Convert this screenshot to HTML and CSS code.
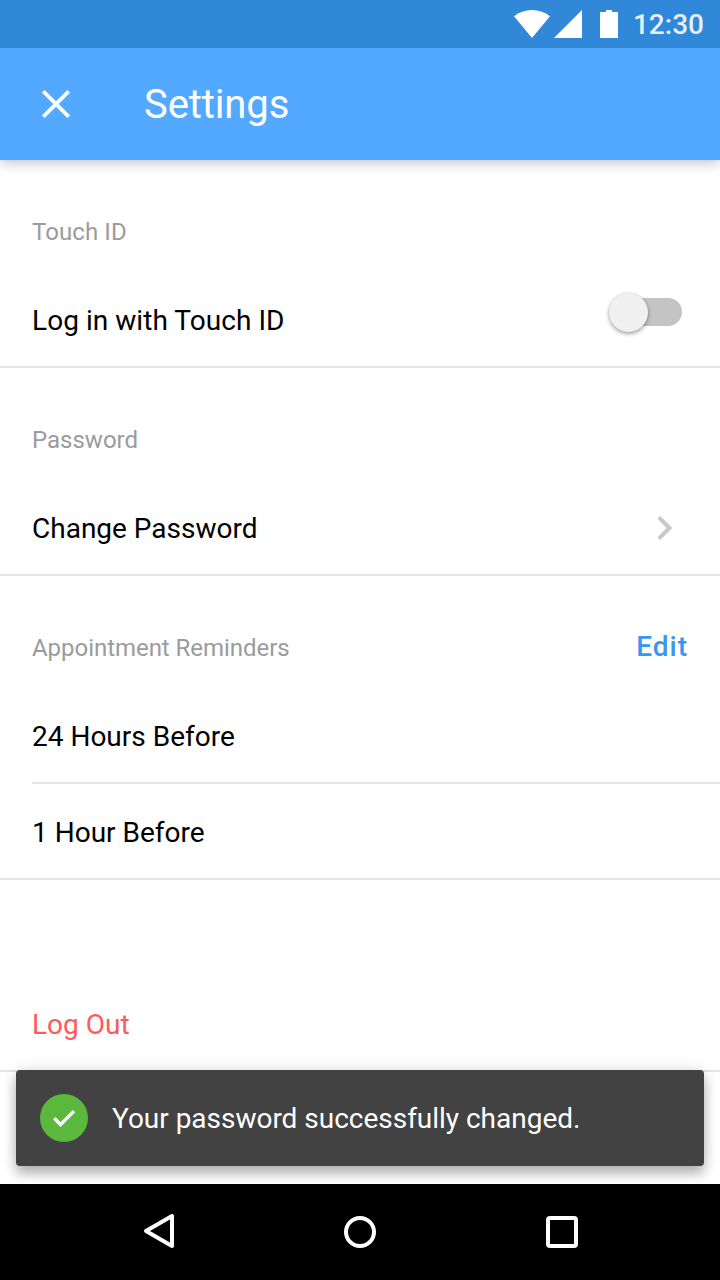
FILE: index.html
```html
<!DOCTYPE html>
<html lang="en">
<head>
<meta charset="utf-8">
<title>Settings</title>
<link rel="stylesheet" href="styles.css">
</head>
<body>
<div class="screen">
  <div class="status-bar">
    <svg class="status-icons" viewBox="0 0 104 28" fill="#fff">
      <path d="M18 28L0 6.200C5 2.300 11 0 18 0s13 2.300 18 6.200z"/>
      <path d="M40 28L68 0v28z"/>
      <path d="M86 2h6V0h6v2h6v26H86z"/>
    </svg>
    <span class="clock">12:30</span>
  </div>
  <header class="app-bar">
    <svg class="close" viewBox="0 0 28 28" fill="none" stroke="#fff" stroke-width="3.800"><path d="M1.300 1.300l25.400 25.400M26.700 1.300L1.300 26.700"/></svg>
    <h1 class="title">Settings</h1>
  </header>
  <main class="content">
    <section>
      <div class="section-head"><h2 class="label label-touch">Touch ID</h2></div>
      <div class="row">
        <span class="row-text text-touch">Log in with Touch ID</span>
        <span class="switch"><span class="thumb"></span></span>
      </div>
    </section>
    <section>
      <div class="section-head"><h2 class="label">Password</h2></div>
      <div class="row">
        <span class="row-text">Change Password</span>
        <svg class="chevron" viewBox="0 0 16 24" fill="none" stroke="#c8c8c8" stroke-width="4"><path d="M1.900 1.400L12.500 12 1.900 22.600"/></svg>
      </div>
    </section>
    <section>
      <div class="section-head"><h2 class="label label-reminders">Appointment Reminders</h2><a class="edit">Edit</a></div>
      <div class="row row-inset"><span class="row-text">24 Hours Before</span></div>
      <div class="row"><span class="row-text">1 Hour Before</span></div>
    </section>
    <div class="row row-logout"><span class="row-text">Log Out</span></div>
    <div class="snackbar">
      <svg class="check" viewBox="0 0 48 48" fill="none"><circle cx="24" cy="24" r="24" fill="#5ab93c"/><path d="M14.300 24.200L20.500 30.600 34 17.100" stroke="#fff" stroke-width="3.400"/></svg>
      <span class="message">Your password successfully changed.</span>
    </div>
  </main>
  <nav class="nav-bar">
    <svg class="nav-icon" viewBox="0 0 48 48"><path d="M38 8v30L12 23z" stroke-linejoin="round"/></svg>
    <svg class="nav-icon" viewBox="0 0 48 48"><circle cx="24" cy="24" r="14"/></svg>
    <svg class="nav-icon" viewBox="0 0 48 48"><rect x="10" y="10" width="28" height="28" rx="2"/></svg>
  </nav>
</div>
</body>
</html>
```
FILE: styles.css
```css
* { box-sizing: border-box; }
body { margin: 0; font-family: Roboto, sans-serif; }
h1, h2 { margin: 0; font-weight: 400; }
svg { display: block; flex: none; }
.screen { width: 720px; height: 1280px; display: flex; flex-direction: column; background: #fff; overflow: hidden; }
.status-bar { position: relative; z-index: 1; height: 48px; flex: none; display: flex; align-items: center; justify-content: flex-end; padding-right: 16px; background: #3187d8; }
.status-icons { width: 104px; height: 28px; margin-right: 15px; }
.clock { padding-top: 2px; font-size: 28px; line-height: 32px; font-weight: 500; color: rgba(255,255,255,.88); }
.app-bar { height: 112px; flex: none; display: flex; align-items: center; padding-left: 42px; background: #52a9ff; box-shadow: 0 2px 12px rgba(20,20,90,.3); }
.close { width: 28px; height: 28px; margin-right: 74px; }
.title { padding-top: 2px; font-size: 40px; line-height: 48px; letter-spacing: -.1px; color: #fff; }
.content { position: relative; flex: 1; display: flex; flex-direction: column; }
.section-head { height: 112px; display: flex; align-items: center; justify-content: space-between; padding: 32px 32px 0; }
.label { font-size: 24px; line-height: 32px; color: #9b9b9b; }
.label-touch { letter-spacing: .08px; }
.label-reminders { letter-spacing: -.04px; }
.edit { padding-bottom: 2px; font-size: 28px; line-height: 32px; font-weight: 500; letter-spacing: 1px; color: #3a97f0; }
.row { height: 96px; display: flex; align-items: center; justify-content: space-between; padding: 2px 32px 0; border-bottom: 2px solid #e4e4e4; }
.row-inset { margin-left: 32px; padding-left: 0; }
.row-text { padding-top: 2px; font-size: 28px; line-height: 32px; color: #000; }
.text-touch { letter-spacing: .05px; }
.row-logout { margin-top: 96px; }
.row-logout .row-text { color: #ff5a5a; }
.switch { width: 72px; height: 28px; margin: -16px 6px 0 0; display: flex; align-items: center; background: linear-gradient(#c4c4c4, #c4c4c4) right / 68px 28px no-repeat; border-radius: 14px; }
.thumb { width: 39px; height: 39px; margin-left: -1.5px; flex: none; border-radius: 50%; background: #f0f0f0; box-shadow: 0 2px 4px rgba(0,0,0,.35), 0 0 2px rgba(0,0,0,.12); }
.chevron { width: 16px; height: 24px; margin-right: 15px; }
.snackbar { position: absolute; left: 16px; right: 16px; bottom: 18px; height: 96px; display: flex; align-items: center; gap: 24px; padding-left: 24px; border-radius: 4px; background: #424242; box-shadow: 0 0 16px rgba(0,0,0,.12), 0 8px 12px rgba(0,0,0,.26); }
.check { width: 48px; height: 48px; }
.message { padding-top: 2px; font-size: 28px; line-height: 32px; letter-spacing: -.02px; color: #fff; }
.nav-bar { position: relative; height: 96px; flex: none; display: flex; align-items: center; justify-content: space-between; padding: 0 134px; background: #000; }
.nav-icon { width: 48px; height: 48px; fill: none; stroke: #fff; stroke-width: 4; }
```
